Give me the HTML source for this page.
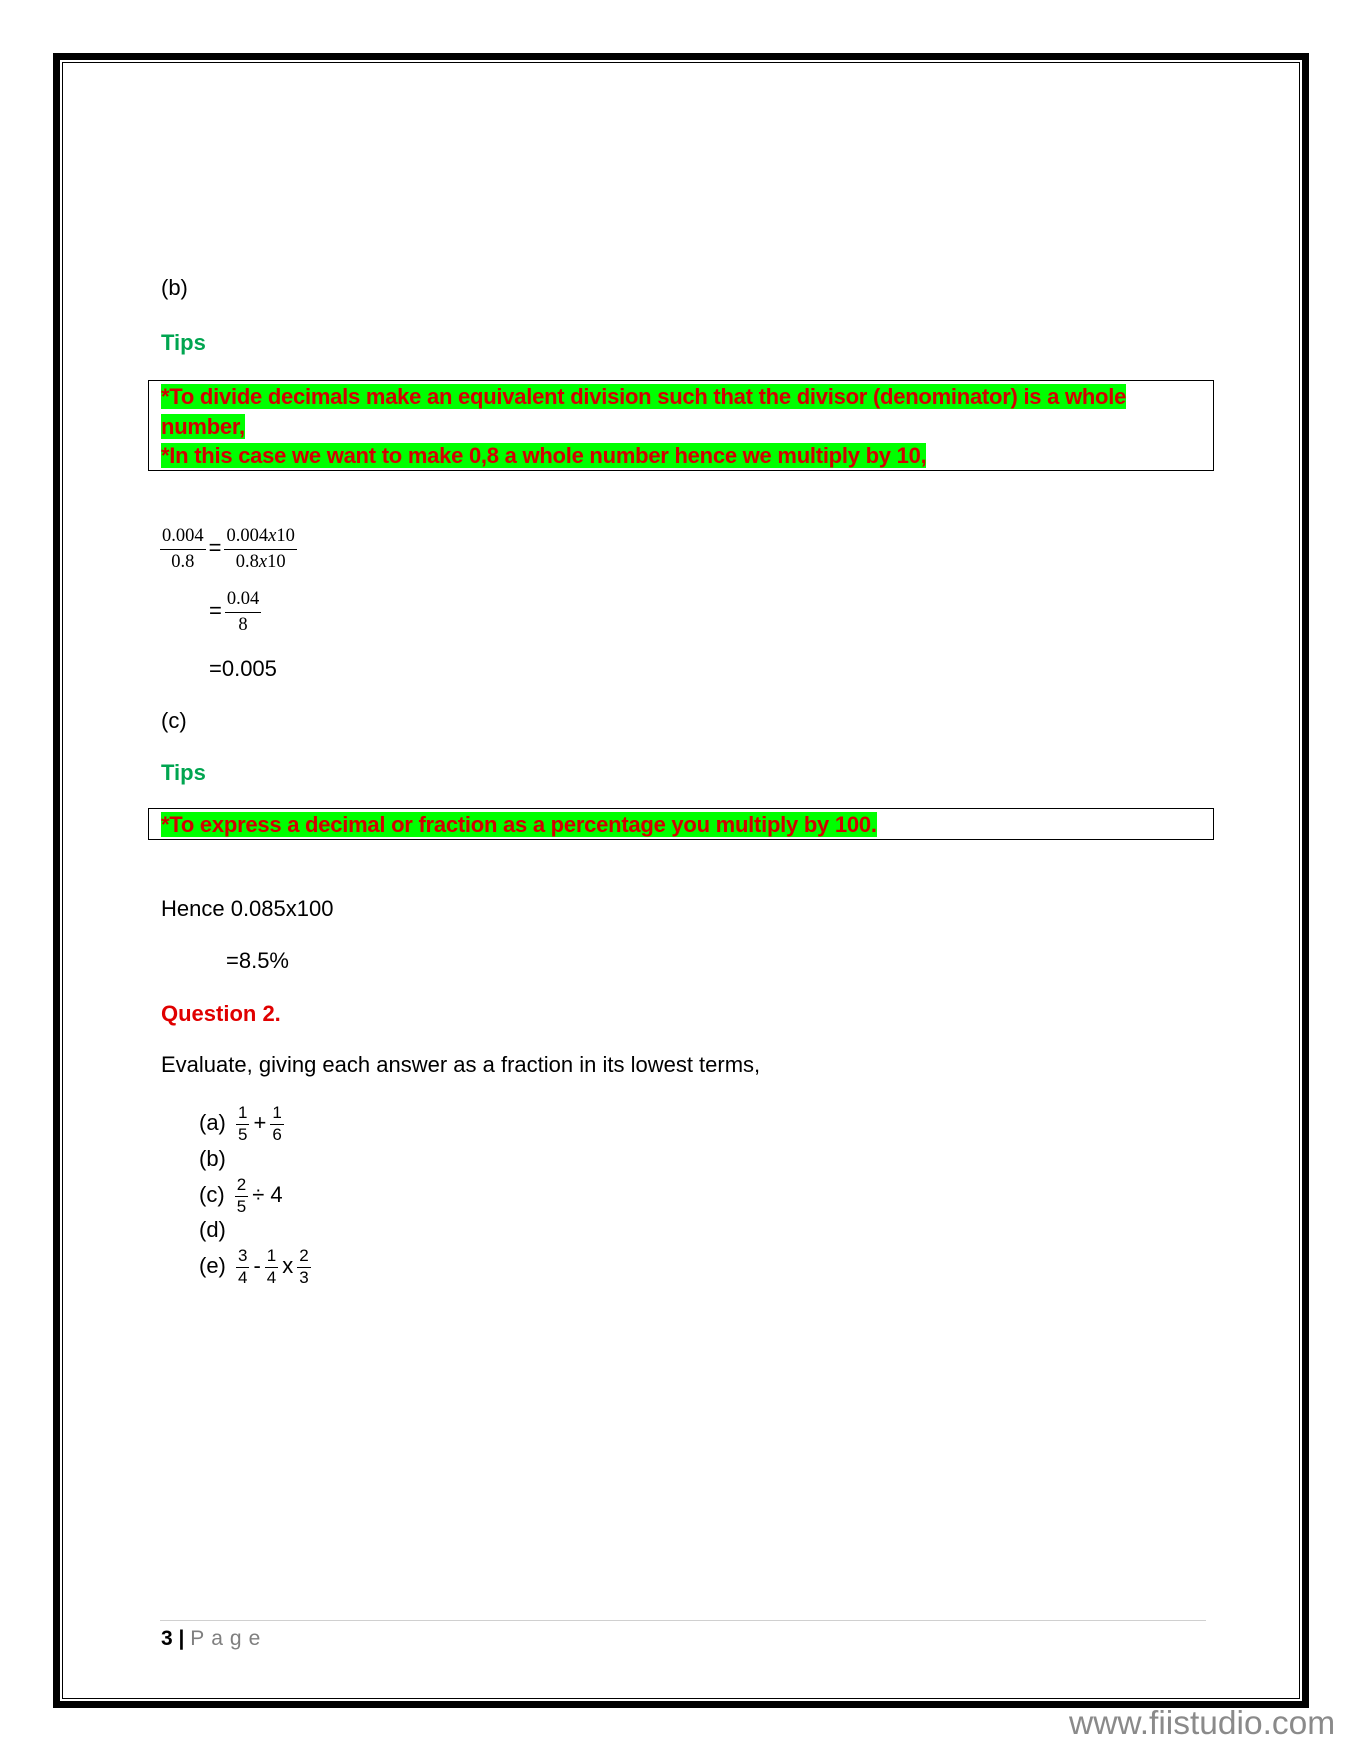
<!DOCTYPE html>
<html><head><meta charset="utf-8"><style>
*{margin:0;padding:0}
body{width:1363px;height:1764px;background:#fff;position:relative;font-family:"Liberation Sans",sans-serif;color:#000;overflow:hidden}
.a{position:absolute;white-space:nowrap;line-height:26px;font-size:22px}
.g{color:#00a550;font-weight:bold}
.r{color:#e00000;font-weight:bold}
.hl{background:#00ff00;color:#d40000;font-weight:bold;font-size:22px;letter-spacing:-0.25px}
.fr{display:inline-block;vertical-align:middle;text-align:center;font-family:"Liberation Serif",serif;font-size:18.5px;line-height:18px;margin:0 3px}
.fr span{display:block;padding:3px 2px 4px}
.fr span:first-child{border-bottom:1.5px solid #000}
.fs{font-family:"Liberation Sans",sans-serif;font-size:17px;line-height:16px;margin:0 4px}
.fs span{padding:2px 2px 3px}
</style></head><body>
<div style="position:absolute;left:53px;top:53px;width:1256px;height:1655px;box-sizing:border-box;border:7px solid #000"></div>
<div style="position:absolute;left:62px;top:62px;width:1238px;height:1637px;box-sizing:border-box;border:1.5px solid #000"></div>

<div class="a" style="left:161px;top:275px">(b)</div>
<div class="a g" style="left:161px;top:330px">Tips</div>
<div style="position:absolute;left:148px;top:380px;width:1066px;height:91px;box-sizing:border-box;border:1.5px solid #000"></div>
<div class="a" style="left:161px;top:382px;line-height:29.5px">
<span class="hl">*To divide decimals make an equivalent division such that the divisor (denominator) is a whole</span><br>
<span class="hl">number,</span><br>
<span class="hl">*In this case we want to make 0,8 a whole number hence we multiply by 10,</span></div>

<div class="a" style="left:157px;top:522px;line-height:52px">
<span class="fr"><span>0.004</span><span>0.8</span></span>=<span class="fr"><span>0.004<i>x</i>10</span><span>0.8<i>x</i>10</span></span></div>
<div class="a" style="left:209px;top:585px;line-height:52px">=<span class="fr"><span>0.04</span><span>8</span></span></div>
<div class="a" style="left:209px;top:656px">=0.005</div>
<div class="a" style="left:161px;top:708px">(c)</div>
<div class="a g" style="left:161px;top:760px">Tips</div>
<div style="position:absolute;left:148px;top:808px;width:1066px;height:32px;box-sizing:border-box;border:1.5px solid #000"></div>
<div class="a" style="left:161px;top:811px;line-height:28px"><span class="hl">*To express a decimal or fraction as a percentage you multiply by 100.</span></div>
<div class="a" style="left:161px;top:896px">Hence 0.085x100</div>
<div class="a" style="left:226px;top:948px">=8.5%</div>
<div class="a r" style="left:161px;top:1001px">Question 2.</div>
<div class="a" style="left:161px;top:1052px">Evaluate, giving each answer as a fraction in its lowest terms,</div>

<div class="a" style="left:199px;top:1099px;line-height:48px">(a) <span class="fr fs"><span>1</span><span>5</span></span>+<span class="fr fs"><span>1</span><span>6</span></span></div>
<div class="a" style="left:199px;top:1146px">(b)</div>
<div class="a" style="left:199px;top:1171px;line-height:48px">(c) <span class="fr fs"><span>2</span><span>5</span></span>÷ 4</div>
<div class="a" style="left:199px;top:1217px">(d)</div>
<div class="a" style="left:199px;top:1242px;line-height:48px">(e) <span class="fr fs"><span>3</span><span>4</span></span>-<span class="fr fs"><span>1</span><span>4</span></span>x<span class="fr fs"><span>2</span><span>3</span></span></div>

<div style="position:absolute;left:160px;top:1620px;width:1046px;height:1px;background:#d0d0d0"></div>
<div class="a" style="left:161px;top:1626px;font-size:21px"><b>3 |</b> <span style="color:#7f7f7f;letter-spacing:7px">Page</span></div>
<div class="a" style="left:1069px;top:1705px;font-size:33.5px;line-height:38px;color:#8a8a8a">www.fiistudio.com</div>
</body></html>
